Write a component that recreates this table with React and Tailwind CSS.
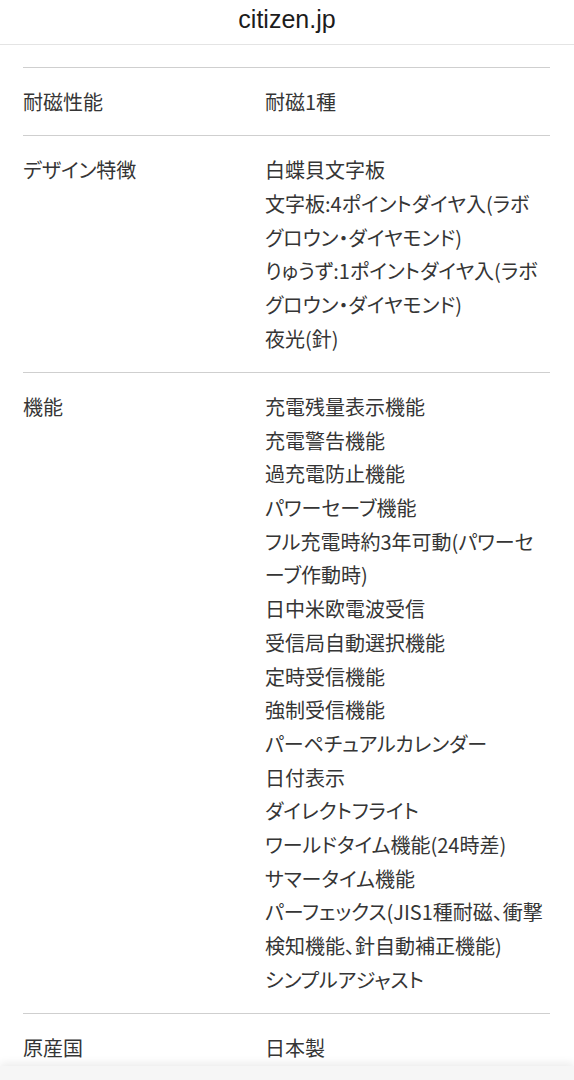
const specs = [
  { label: "耐磁性能", values: ["耐磁1種"] },
  {
    label: "デザイン特徴",
    values: [
      "白蝶貝文字板",
      "文字板:4ポイントダイヤ入(ラボ\nグロウン・ダイヤモンド)",
      "りゅうず:1ポイントダイヤ入(ラボ\nグロウン・ダイヤモンド)",
      "夜光(針)",
    ],
  },
  {
    label: "機能",
    values: [
      "充電残量表示機能",
      "充電警告機能",
      "過充電防止機能",
      "パワーセーブ機能",
      "フル充電時約3年可動(パワーセ\nーブ作動時)",
      "日中米欧電波受信",
      "受信局自動選択機能",
      "定時受信機能",
      "強制受信機能",
      "パーペチュアルカレンダー",
      "日付表示",
      "ダイレクトフライト",
      "ワールドタイム機能(24時差)",
      "サマータイム機能",
      "パーフェックス(JIS1種耐磁、衝撃\n検知機能、針自動補正機能)",
      "シンプルアジャスト",
    ],
  },
  { label: "原産国", values: ["日本製"] },
];

export default function App() {
  return (
    <div className="h-[1080px] overflow-hidden bg-white">
      {/* ブラウザのアドレスバー */}
      <header className="h-[45px] flex items-center justify-center pb-[5px] border-b border-[#e4e4e4]">
        <span className="text-[25px] text-[#1c1c1c] font-['Liberation_Sans',Arial,sans-serif]">
          citizen.jp
        </span>
      </header>

      <main className="pt-[22px] pl-[23px] pr-[24px]">
        <dl className="font-['Noto_Sans_CJK_JP',sans-serif] text-[20px] leading-[33.7px] text-[#353535] [font-feature-settings:'palt']">
          {specs.map((row) => (
            <div
              key={row.label}
              className="flex border-t border-[#cfcfcf] py-[16.8px]"
            >
              <dt className="w-[242px] shrink-0">{row.label}</dt>
              <dd className="flex-1 min-w-0 whitespace-pre-line">
                {row.values.map((v) => (
                  <div key={v}>{v}</div>
                ))}
              </dd>
            </div>
          ))}
        </dl>
      </main>

      {/* 下部ツールバーの影 */}
      <div className="fixed bottom-0 left-0 right-0 h-[14px] bg-[#f6f6f6] shadow-[0_-3px_8px_rgba(0,0,0,0.08)]"></div>
    </div>
  );
}
